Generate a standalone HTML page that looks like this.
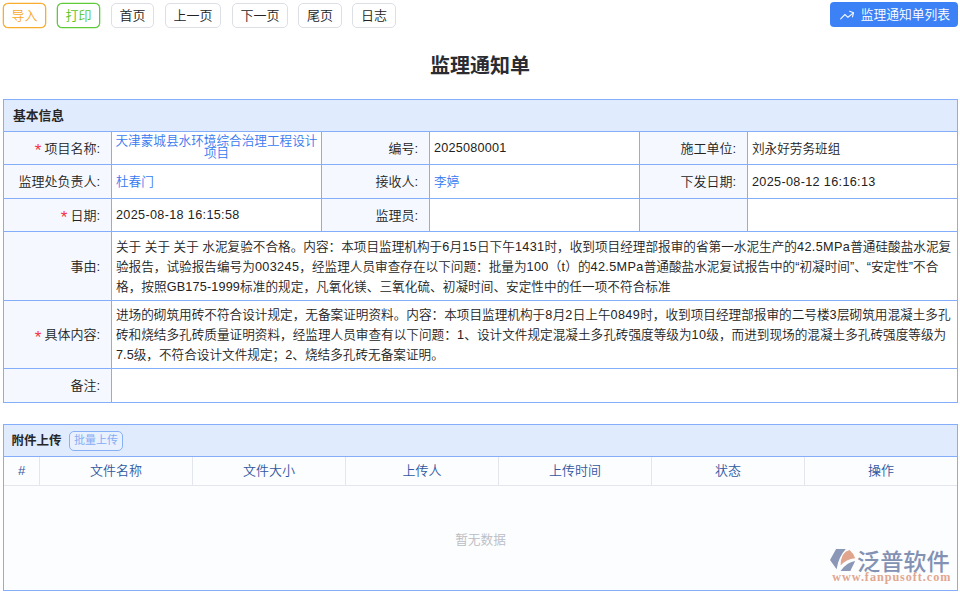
<!DOCTYPE html>
<html lang="zh-CN">
<head>
<meta charset="utf-8">
<title>监理通知单</title>
<style>
*{box-sizing:border-box;margin:0;padding:0}
html,body{width:960px;height:593px;overflow:hidden;background:#fff}
body{font-family:"Liberation Sans","Noto Sans CJK SC",sans-serif;font-size:12.63px;color:#222;position:relative;font-weight:350}
.btn{position:absolute;top:3px;height:25px;border:1px solid #dcdfe6;border-radius:5px;background:#fff;font-size:13px;line-height:24px;text-align:center;color:#222}
.b1{left:3px;width:43px;border-color:#f9ad2e;color:#f9a825;box-shadow:0 0 0 .3px #f9ad2e}
.b2{left:57px;width:43px;border-color:#5fc93a;color:#52c41a;box-shadow:0 0 0 .3px #5fc93a}
.blue{position:absolute;left:830px;top:2px;width:128px;height:25px;background:#3c82f6;border-radius:4px;color:#fff;font-size:12.75px;line-height:26px;padding-left:30.8px}
.blue svg{position:absolute;left:0;top:0}
h1{position:absolute;left:0;top:52px;width:960px;text-align:center;font-size:20px;line-height:28px;font-weight:bold;color:#2a2c32}
.panel{position:absolute;left:3px;width:955px;border:1px solid #84aef9;background:#fff}
.ph{height:32px;background:#e0ebfe;border-bottom:1px solid #84aef9;font-weight:bold;line-height:31px;padding-left:9px;font-size:12.75px;color:#262626}
.row{position:absolute;left:0;width:953px;border-bottom:1px solid #84aef9}
.c{position:absolute;top:0;bottom:0;border-right:1px solid #84aef9;display:flex;align-items:center}
.l{background:#f5f8ff;justify-content:flex-end;padding-right:11px;font-size:13px;padding-bottom:2px}
.v{padding-left:4px;padding-right:4px;background:#fff;padding-bottom:2px}
.dt{letter-spacing:.34px;padding-bottom:0}
.red{color:#f5323c;margin-right:3px;position:relative;top:4px;font-size:17px;line-height:10px}
.lnk{color:#3779f0}
.th{position:absolute;top:0;height:28px;line-height:27px;text-align:center;border-right:1px solid #e3e6ec;font-size:13px}
.long{display:block;padding-top:4.5px}
.long div{height:20.4px;line-height:20.4px;white-space:nowrap}
.n{letter-spacing:.38px}#a3 .n{letter-spacing:.18px}#b3 .n{letter-spacing:.05px}#a3{letter-spacing:.04px}
</style>
</head>
<body>
<div class="btn b1">导入</div>
<div class="btn b2">打印</div>
<div class="btn" style="left:111px;width:43px">首页</div>
<div class="btn" style="left:165px;width:56px">上一页</div>
<div class="btn" style="left:232px;width:56px">下一页</div>
<div class="btn" style="left:298px;width:44px">尾页</div>
<div class="btn" style="left:352px;width:44px">日志</div>
<div class="blue"><svg width="32" height="25" viewBox="0 0 32 25" fill="none" stroke="#fff" stroke-width="1.15" stroke-linecap="round" stroke-linejoin="round" stroke-opacity=".92"><path d="M10.7 16.8 L14.9 12.5 L17.9 15.3 L23.2 11.1"/><path d="M19.6 9.3 L23.5 10.8 L22.5 14.8"/></svg>监理通知单列表</div>
<h1>监理通知单</h1>

<div class="panel" style="top:99px;height:304px">
  <div class="ph">基本信息</div>
  <div class="row" style="top:32px;height:33px">
    <div class="c l" style="left:0;width:108px"><span class="red">*</span>项目名称:</div>
    <div class="c v lnk" style="left:108px;width:210px;text-align:center;line-height:12px;white-space:nowrap;justify-content:center;padding:0 0 3px 0">天津蒙城县水环境综合治理工程设计<br>项目</div>
    <div class="c l" style="left:318px;width:108px">编号:</div>
    <div class="c v dt" style="left:426px;width:210px;letter-spacing:.22px">2025080001</div>
    <div class="c l" style="left:636px;width:108px">施工单位:</div>
    <div class="c v" style="left:744px;width:209px;border-right:0">刘永好劳务班组</div>
  </div>
  <div class="row" style="top:65px;height:34px">
    <div class="c l" style="left:0;width:108px">监理处负责人:</div>
    <div class="c v lnk" style="left:108px;width:210px">杜春门</div>
    <div class="c l" style="left:318px;width:108px">接收人:</div>
    <div class="c v lnk" style="left:426px;width:210px">李婷</div>
    <div class="c l" style="left:636px;width:108px">下发日期:</div>
    <div class="c v dt" style="left:744px;width:209px;border-right:0">2025-08-12 16:16:13</div>
  </div>
  <div class="row" style="top:99px;height:33px">
    <div class="c l" style="left:0;width:108px"><span class="red">*</span>日期:</div>
    <div class="c v dt" style="left:108px;width:210px">2025-08-18 16:15:58</div>
    <div class="c l" style="left:318px;width:108px">监理员:</div>
    <div class="c v" style="left:426px;width:210px"></div>
    <div class="c l" style="left:636px;width:108px"></div>
    <div class="c v" style="left:744px;width:209px;border-right:0"></div>
  </div>
  <div class="row" style="top:132px;height:69px">
    <div class="c l" style="left:0;width:108px">事由:</div>
    <div class="c v long" style="left:108px;width:845px;border-right:0"><div id="a1">关于 关于 关于 水泥复验不合格。内容：本项目监理机构于<span class="n">6</span>月<span class="n">15</span>日下午<span class="n">1431</span>时，收到项目经理部报审的省第一水泥生产的<span class="n">42.5MPa</span>普通硅酸盐水泥复</div><div id="a2">验报告，试验报告编号为<span class="n">003245</span>，经监理人员审查存在以下问题：批量为<span class="n">100</span>（<span class="n">t</span>）的<span class="n">42.5MPa</span>普通酸盐水泥复试报告中的“初凝时间”、“安定性”不合</div><div id="a3">格，按照<span class="n">GB175-1999</span>标准的规定，凡氧化镁、三氧化硫、初凝时间、安定性中的任一项不符合标准</div></div>
  </div>
  <div class="row" style="top:201px;height:68px">
    <div class="c l" style="left:0;width:108px"><span class="red">*</span>具体内容:</div>
    <div class="c v long" style="left:108px;width:845px;border-right:0;padding-top:3.5px"><div id="b1">进场的砌筑用砖不符合设计规定，无备案证明资料。内容：本项目监理机构于<span class="n">8</span>月<span class="n">2</span>日上午<span class="n">0849</span>时，收到项目经理部报审的二号楼<span class="n">3</span>层砌筑用混凝土多孔</div><div id="b2">砖和烧结多孔砖质量证明资料，经监理人员审查有以下问题：<span class="n">1</span>、设计文件规定混凝土多孔砖强度等级为<span class="n">10</span>级，而进到现场的混凝土多孔砖强度等级为</div><div id="b3"><span class="n">7.5</span>级，不符合设计文件规定；<span class="n">2</span>、烧结多孔砖无备案证明。</div></div>
  </div>
  <div class="row" style="top:269px;height:33px;border-bottom:0">
    <div class="c l" style="left:0;width:108px">备注:</div>
    <div class="c v" style="left:108px;width:845px;border-right:0"></div>
  </div>
</div>

<div class="panel" style="top:424px;height:167px;background:#fcfdfe">
  <div class="ph" style="position:relative;padding-left:7.5px;font-size:12.5px;line-height:33px">附件上传<span style="position:absolute;left:65px;top:6px;height:20px;width:54px;border:1px solid #88b0f7;border-radius:5px;font-size:11px;line-height:17px;font-weight:normal;color:#86adf3;text-align:center;background:#e9f1ff">批量上传</span></div>
  <div style="position:absolute;left:0;top:32px;width:953px;height:29px;border-bottom:1px solid #e3e6ec;color:#30579f;background:#fcfdfe">
    <div class="th" style="left:0;width:36px">#</div>
    <div class="th" style="left:36px;width:153px">文件名称</div>
    <div class="th" style="left:189px;width:153px">文件大小</div>
    <div class="th" style="left:342px;width:153px">上传人</div>
    <div class="th" style="left:495px;width:153px">上传时间</div>
    <div class="th" style="left:648px;width:153px">状态</div>
    <div class="th" style="left:801px;width:152px;border-right:0">操作</div>
  </div>
  <div style="position:absolute;left:0;top:103.5px;width:953px;text-align:center;font-size:12.7px;color:#b9bcc4">暂无数据</div>
</div>

<svg style="position:absolute;left:826px;top:542px" width="130" height="46" viewBox="826 542 130 46">
  <path d="M830 560 L836.1 549.1 L845.8 549.1 Q838.5 557 836.6 569.3 Z" fill="#8a97b6"/>
  <path d="M840.6 565.6 Q840.5 552.5 849.6 550.1 Q853.5 553.5 855.2 558.2 Q846 559 840.6 565.6 Z" fill="#e1a58d"/>
  <path d="M840.6 571.1 Q846 562.5 855.2 561 L850.3 571.1 Z" fill="#8a97b6"/>
  <text x="857" y="569.6" font-family="'Liberation Sans','Noto Sans CJK SC',sans-serif" font-size="23.2" font-weight="500" fill="#8391b3">泛普软件</text>
  <text id="url" x="832.3" y="581.2" font-family="'Liberation Serif',serif" font-weight="bold" font-size="12.2" letter-spacing="0.95" fill="#e2a68f">www.fanpusoft.com</text>
</svg>
</body>
</html>
